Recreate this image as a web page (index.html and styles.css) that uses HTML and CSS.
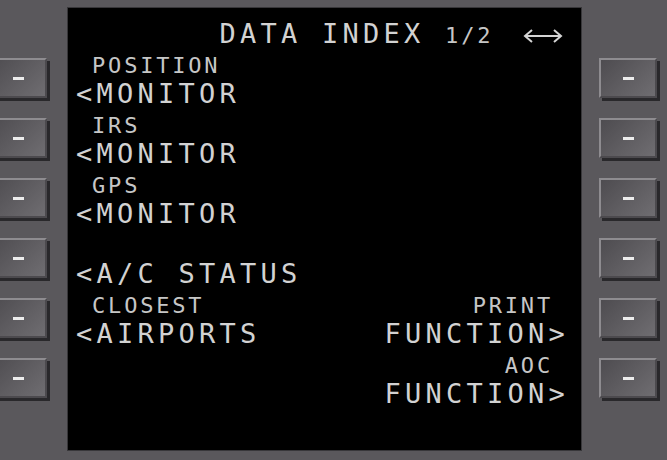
FILE: index.html
```html
<!DOCTYPE html>
<html lang="en">
<head>
    <meta charset="UTF-8">
    <meta name="viewport" content="width=device-width, initial-scale=1.0">
    <title>CDU - Data Index</title>
    <link rel="stylesheet" href="styles.css">
</head>
<body>
    <div class="cdu">
        <!-- line select keys, left side -->
        <div class="keys keys-left">
            <button class="lsk"><span class="dash"></span></button>
            <button class="lsk"><span class="dash"></span></button>
            <button class="lsk"><span class="dash"></span></button>
            <button class="lsk"><span class="dash"></span></button>
            <button class="lsk"><span class="dash"></span></button>
            <button class="lsk"><span class="dash"></span></button>
        </div>

        <div class="screen">
            <div class="line title"><span>       DATA INDEX </span><span class="sm">1/2</span><svg class="arrows" width="40" height="16" viewBox="0 0 40 16"><path d="M2 8H38M9 2L2 8L9 14M31 2L38 8L31 14" fill="none" stroke="#d4d4d4" stroke-width="2"/></svg></div>
            <div class="line"><span class="sm"> POSITION</span></div>
            <div class="line">&lt;MONITOR</div>
            <div class="line"><span class="sm"> IRS</span></div>
            <div class="line">&lt;MONITOR</div>
            <div class="line"><span class="sm"> GPS</span></div>
            <div class="line">&lt;MONITOR</div>
            <div class="line"></div>
            <div class="line">&lt;A/C STATUS</div>
            <div class="line split"><span class="cell"><span class="sm"> CLOSEST</span></span><span class="cell"><span class="sm">PRINT </span></span></div>
            <div class="line split"><span class="cell">&lt;AIRPORTS</span><span class="cell">FUNCTION&gt;</span></div>
            <div class="line split"><span class="cell"></span><span class="cell"><span class="sm">AOC </span></span></div>
            <div class="line split"><span class="cell"></span><span class="cell">FUNCTION&gt;</span></div>
        </div>

        <!-- line select keys, right side -->
        <div class="keys keys-right">
            <button class="lsk"><span class="dash"></span></button>
            <button class="lsk"><span class="dash"></span></button>
            <button class="lsk"><span class="dash"></span></button>
            <button class="lsk"><span class="dash"></span></button>
            <button class="lsk"><span class="dash"></span></button>
            <button class="lsk"><span class="dash"></span></button>
        </div>
    </div>
</body>
</html>
```

FILE: styles.css
```css
body {
    margin: 0;
    padding: 0;
    background: #5a585c;
    overflow: hidden;
}
.cdu {
    display: flex;
    height: 460px;
}
.keys {
    display: flex;
    flex-direction: column;
    gap: 20px;
    padding-top: 58px;
}
.keys-left {
    width: 50px;
    margin-left: -11px;
}
.keys-right {
    margin-left: 17px;
}
.lsk {
    width: 58px;
    height: 40px;
    padding: 0;
    border: 2px solid;
    border-color: #8e8c90 #4c4a4e #4c4a4e #8e8c90;
    background: linear-gradient(135deg, #4e4c50, #6f6d71);
    box-shadow: 3px 3px 0 #29282b;
    display: flex;
    align-items: center;
    justify-content: center;
    cursor: pointer;
}
.dash {
    width: 11px;
    height: 3px;
    background: #ececec;
}
.screen {
    margin-left: 28px;
    margin-top: 7px;
    width: 515px;
    height: 444px;
    box-sizing: border-box;
    padding: 11px 12px 0 8px;
    background: #000;
    border: 1px solid #38373a;
    font-family: "DejaVu Sans Mono", monospace;
    font-size: 27px;
    line-height: 30px;
    letter-spacing: 4.25px;
    color: #d2d2d2;
}
.line {
    height: 30px;
    white-space: pre;
}
.split {
    display: flex;
    justify-content: space-between;
}
.cell {
    line-height: 30px;
}
.sm {
    font-size: 22px;
    line-height: 1;
    letter-spacing: 2.8px;
    color: #c6c6c6;
}
.title .arrows {
    margin-left: 30px;
    vertical-align: -1px;
}
```
